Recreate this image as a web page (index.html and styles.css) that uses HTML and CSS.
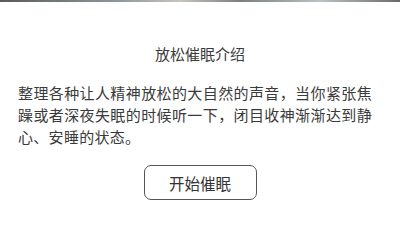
FILE: index.html
```html
<!DOCTYPE html>
<html lang="zh-CN">
<head>
    <meta charset="UTF-8">
    <meta name="viewport" content="width=device-width, initial-scale=1.0">
    <title>放松催眠介绍</title>
    <link rel="stylesheet" href="styles.css">
</head>
<body>
    <div class="topbar"></div>
    <div class="intro">
        <h1 class="title">放松催眠介绍</h1>
        <p class="desc">整理各种让人精神放松的大自然的声音，当你紧张焦躁或者深夜失眠的时候听一下，闭目收神渐渐达到静心、安睡的状态。</p>
        <button class="start-btn">开始催眠</button>
    </div>
</body>
</html>
```

FILE: styles.css
```css
body {
    margin: 0;
    background: #fff;
    font-family: "Noto Sans CJK SC", "Noto Sans", sans-serif;
    color: #3a3a3a;
}
.topbar {
    height: 2px;
    background: linear-gradient(90deg, #5a5a5a 0%, #8c9a9c 30%, #c8c4bc 45%, #7a7e80 60%, #b9c2c4 80%, #6a6a6a 100%);
}
.intro {
    display: flex;
    flex-direction: column;
    align-items: center;
}
.title {
    margin: 42px 0 0;
    font-size: 15px;
    line-height: 20px;
    font-weight: 400;
    color: #3c3c3c;
}
.desc {
    margin: 18px 0 0;
    padding: 0 28px 0 18px;
    font-size: 15px;
    line-height: 22px;
    letter-spacing: 0.3px;
    text-align: justify;
    color: #3a3a3a;
}
.start-btn {
    margin-top: 17px;
    width: 113px;
    height: 35px;
    background: #fff;
    border: 1.5px solid #555;
    border-radius: 7px;
    font-family: inherit;
    font-size: 15.5px;
    color: #333;
    padding: 0;
}
```
